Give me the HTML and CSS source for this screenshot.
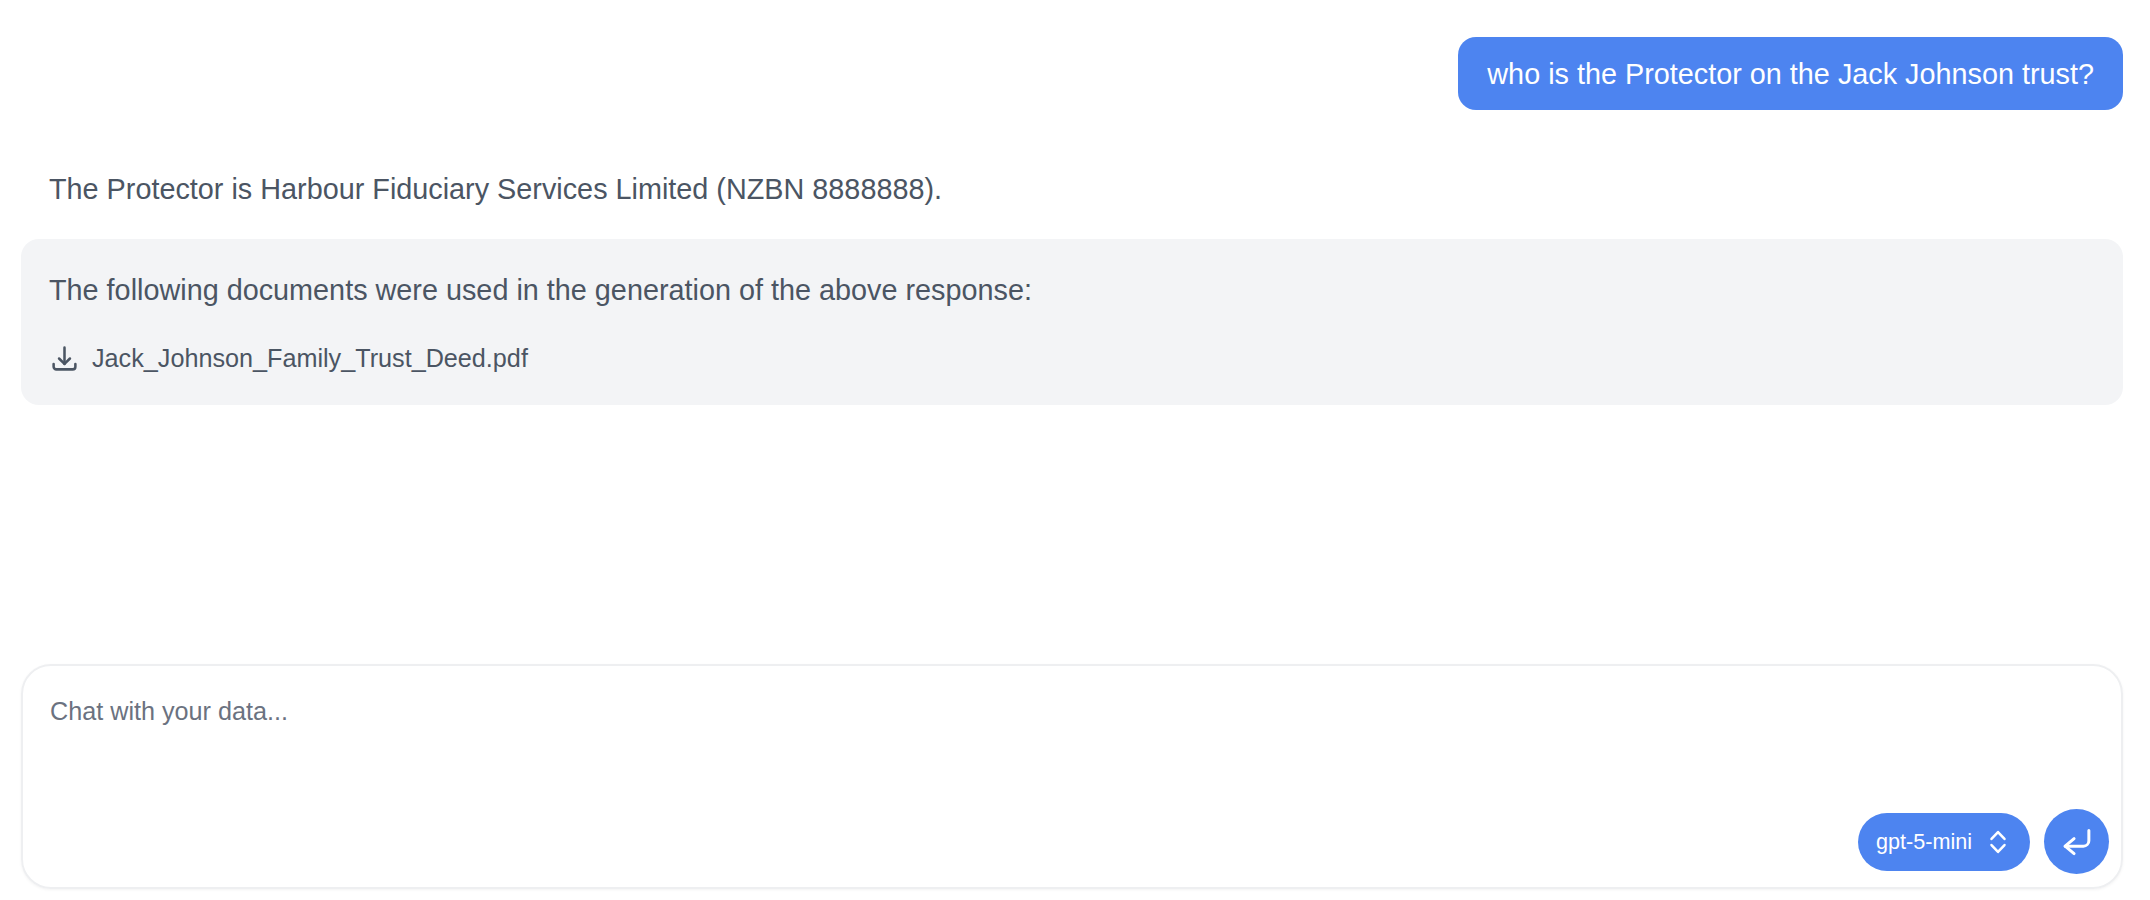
FILE: index.html
```html
<!DOCTYPE html>
<html lang="en">
<head>
    <meta charset="UTF-8">
    <title>Chat</title>
    <link rel="stylesheet" href="styles.css">
</head>
<body>
    <div class="chat">
        <div class="messages">
            <div class="user-row">
                <div class="user-bubble">who is the Protector on the Jack Johnson trust?</div>
            </div>
            <p class="answer">The Protector is Harbour Fiduciary Services Limited (NZBN 8888888).</p>
            <div class="sources">
                <p class="sources-title">The following documents were used in the generation of the above response:</p>
                <div class="source-file">
                    <svg class="download-icon" viewBox="0 0 24 24" fill="none" stroke="currentColor" stroke-width="2.1" stroke-linecap="round" stroke-linejoin="round">
                        <path d="M3 16.5v2.25A2.25 2.25 0 0 0 5.25 21h13.5A2.25 2.25 0 0 0 21 18.75V16.5"/>
                        <path d="M7.5 12 12 16.5 16.5 12"/>
                        <path d="M12 16.5V3"/>
                    </svg>
                    <span>Jack_Johnson_Family_Trust_Deed.pdf</span>
                </div>
            </div>
        </div>

        <!-- Input box -->
        <div class="input-box">
            <div class="placeholder">Chat with your data...</div>
            <div class="input-actions">
                <div class="model-select">
                    <span>gpt-5-mini</span>
                    <svg class="updown-icon" viewBox="0 0 24 24" fill="none" stroke="currentColor" stroke-width="2.3" stroke-linecap="round" stroke-linejoin="round">
                        <path d="M6 9.2 12 2.8 18 9.2"/>
                        <path d="M6 14.8 12 21.2 18 14.8"/>
                    </svg>
                </div>
                <button class="send-button">
                    <svg class="enter-icon" viewBox="0 0 24 24" fill="none" stroke="currentColor" stroke-width="2.25" stroke-linecap="round" stroke-linejoin="round">
                        <path d="M20.9 3.4V11a4.1 4.1 0 0 1-4.1 4.1H3.1"/>
                        <path d="M9.8 9.5 3.1 15.1l6.7 5.6"/>
                    </svg>
                </button>
            </div>
        </div>
    </div>
</body>
</html>
```

FILE: styles.css
```css
/* General Styles */
body {
    font-family: 'Liberation Sans', Arial, sans-serif;
    margin: 0;
    padding: 0;
    background: #fff;
    color: #4b5563;
    overflow: hidden;
}

.chat {
    height: 900px;
    box-sizing: border-box;
    padding: 37px 27px 11px 21px;
    display: flex;
    flex-direction: column;
}

.messages {
    flex: 1;
}

/* User message */
.user-row {
    display: flex;
    justify-content: flex-end;
}

.user-bubble {
    background: #4d84f0;
    color: #fff;
    font-size: 28.8px;
    line-height: 36px;
    padding: 19px 29px 18px;
    border-radius: 18px;
}

/* Answer */
.answer {
    margin: 0;
    padding: 59px 28px 0;
    font-size: 28.8px;
    line-height: 40px;
}

/* Sources */
.sources {
    margin-top: 30px;
    padding: 31px 28px 31px;
    background: #f3f4f6;
    border-radius: 18px;
}

.sources-title {
    margin: 0;
    font-size: 28.8px;
    line-height: 40px;
}

.source-file {
    display: flex;
    align-items: center;
    gap: 13px;
    margin-top: 32px;
    padding-left: 1px;
    font-size: 25.2px;
    line-height: 32px;
}

.download-icon {
    width: 29px;
    height: 29px;
}

/* Input */
.input-box {
    position: relative;
    height: 225px;
    box-sizing: border-box;
    border: 2px solid #eeeff1;
    border-radius: 30px;
    box-shadow: 0 1px 3px rgba(0, 0, 0, 0.05);
    padding: 29px 27px;
}

.placeholder {
    font-size: 25.2px;
    line-height: 32px;
    color: #6b7280;
}

.input-actions {
    position: absolute;
    right: 12px;
    bottom: 13px;
    display: flex;
    align-items: center;
    gap: 14px;
}

.model-select {
    display: flex;
    align-items: center;
    gap: 13px;
    height: 58px;
    padding: 0 19px 0 18px;
    border-radius: 29px;
    background: #4d84f0;
    color: #fff;
    font-size: 21.6px;
}

.updown-icon {
    width: 26px;
    height: 26px;
}

.send-button {
    width: 65px;
    height: 65px;
    border: none;
    border-radius: 50%;
    padding: 0;
    background: #4d84f0;
    color: #fff;
    display: flex;
    align-items: center;
    justify-content: center;
}

.enter-icon {
    width: 32px;
    height: 32px;
}
```
